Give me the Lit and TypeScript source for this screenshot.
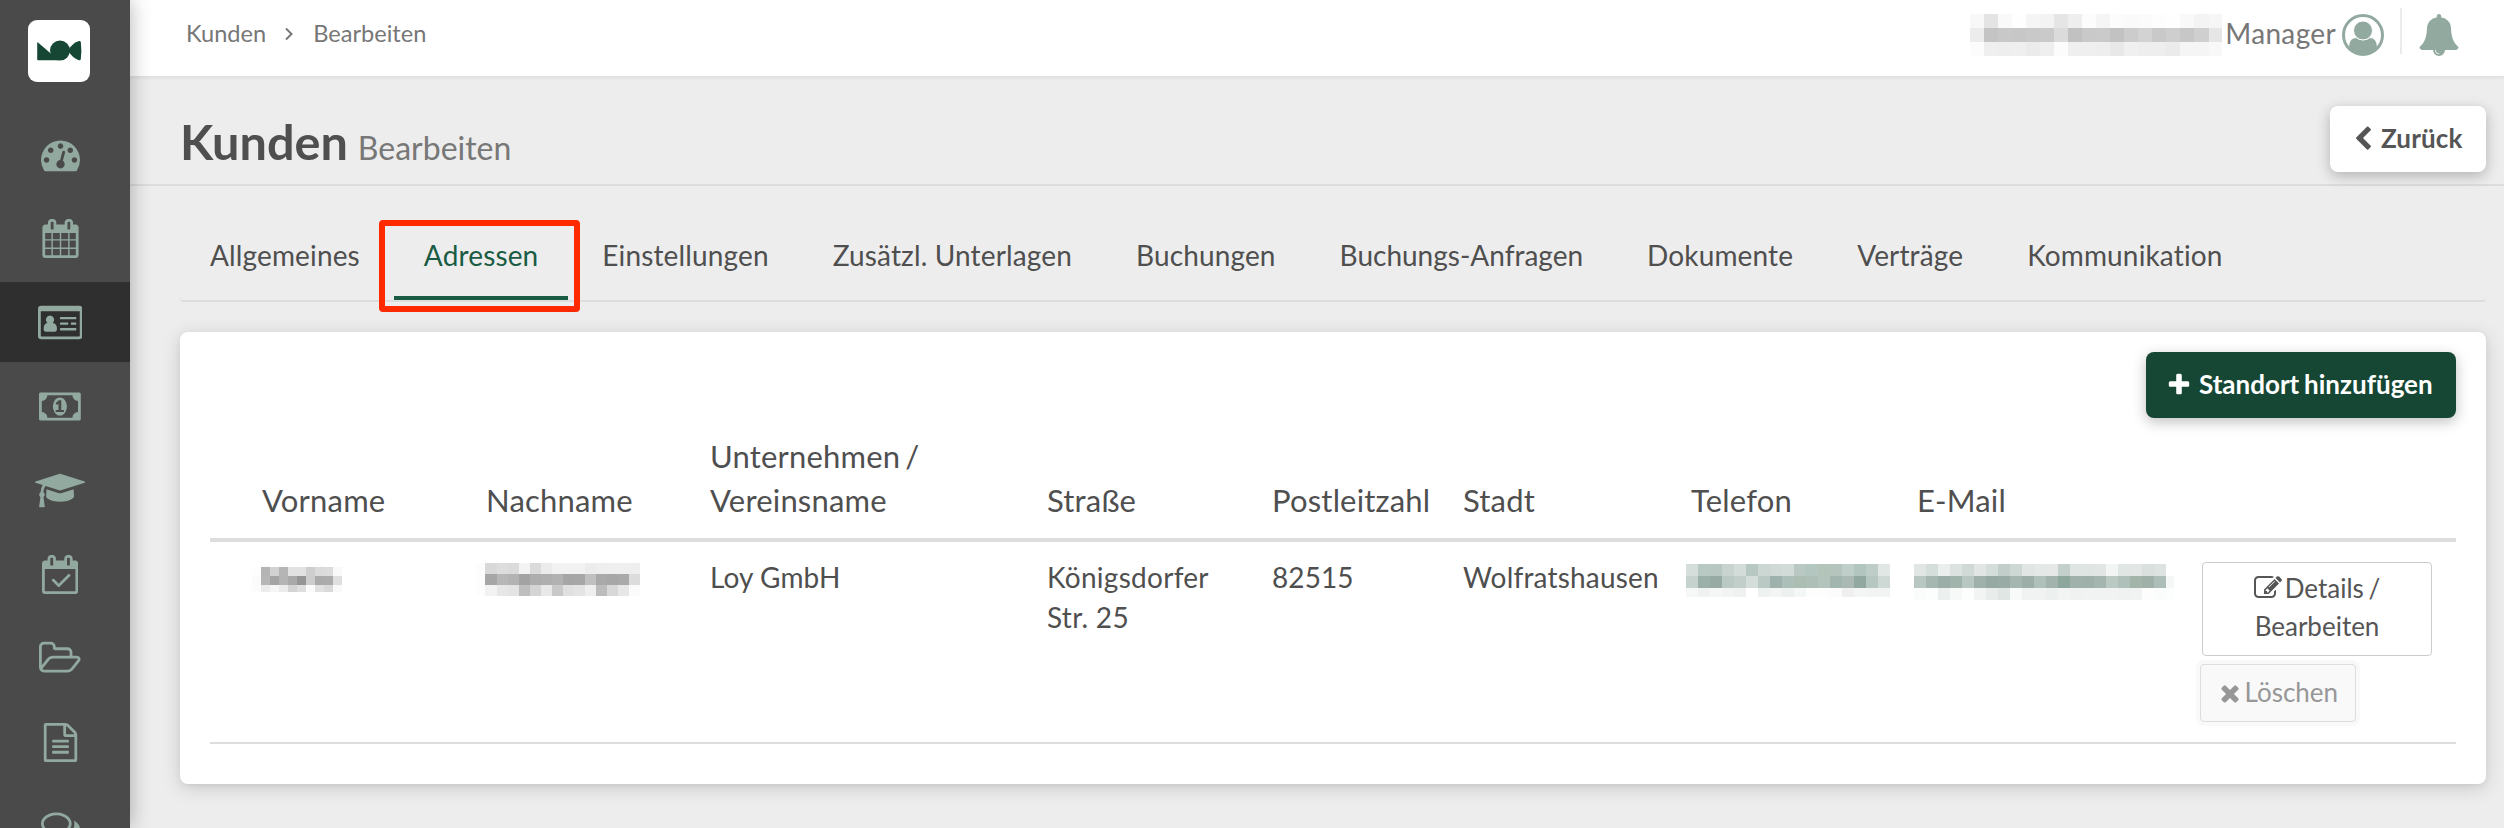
import { LitElement, html, css, svg, nothing } from "lit";
import { customElement, property, state } from "lit/decorators.js";
import { classMap } from "lit/directives/class-map.js";

interface Glyph {
  w: number;
  d: string;
}

// Glyph outlines on a 1792-unit em; w is the advance width.
const ICONS: Record<string, Glyph> = {
  dashboard: {
    w: 1792,
    d: "M384 1152q0-53-37.5-90.5t-90.5-37.5-90.5 37.5-37.5 90.5 37.5 90.5 90.5 37.5 90.5-37.5 37.5-90.5zm192-448q0-53-37.5-90.5t-90.5-37.5-90.5 37.5-37.5 90.5 37.5 90.5 90.5 37.5 90.5-37.5 37.5-90.5zm428 481l101-382q6-26-7.5-48.5t-38.5-29.5-48 6.5-30 39.5l-101 382q-60 5-107 43.5t-63 98.5q-20 77 20 146t117 89 146-20 89-117q16-60-6-117t-72-91zm660-33q0-53-37.5-90.5t-90.5-37.5-90.5 37.5-37.5 90.5 37.5 90.5 90.5 37.5 90.5-37.5 37.5-90.5zm-640-640q0-53-37.5-90.5t-90.5-37.5-90.5 37.5-37.5 90.5 37.5 90.5 90.5 37.5 90.5-37.5 37.5-90.5zm448 192q0-53-37.5-90.5t-90.5-37.5-90.5 37.5-37.5 90.5 37.5 90.5 90.5 37.5 90.5-37.5 37.5-90.5zm320 448q0 261-141 483-19 29-54 29h-1402q-35 0-54-29-141-221-141-483 0-182 71-348t191-286 286-191 348-71 348 71 286 191 191 286 71 348z",
  },
  calendar: {
    w: 1792,
    d: "M192 1664h288v-288h-288v288zm352 0h320v-288h-320v288zm-352-352h288v-320h-288v320zm352 0h320v-320h-320v320zm-352-384h288v-288h-288v288zm736 736h320v-288h-320v288zm-384-736h320v-288h-320v288zm768 736h288v-288h-288v288zm-384-352h320v-320h-320v320zm-352-864v-288q0-13-9.5-22.5t-22.5-9.5h-64q-13 0-22.5 9.5t-9.5 22.5v288q0 13 9.5 22.5t22.5 9.5h64q13 0 22.5-9.5t9.5-22.5zm736 864h288v-320h-288v320zm-384-384h320v-288h-320v288zm384 0h288v-288h-288v288zm32-480v-288q0-13-9.5-22.5t-22.5-9.5h-64q-13 0-22.5 9.5t-9.5 22.5v288q0 13 9.5 22.5t22.5 9.5h64q13 0 22.5-9.5t9.5-22.5zm384-64v1280q0 52-38 90t-90 38h-1408q-52 0-90-38t-38-90v-1280q0-52 38-90t90-38h128v-96q0-66 47-113t113-47h64q66 0 113 47t47 113v96h384v-96q0-66 47-113t113-47h64q66 0 113 47t47 113v96h128q52 0 90 38t38 90z",
  },
  idcard: {
    w: 2048,
    d: "M152 128H1896a152 152 0 0 1 152 152V1512a152 152 0 0 1-152 152H152a152 152 0 0 1-152-152V280a152 152 0 0 1 152-152zM128 384V1504a32 32 0 0 0 32 32H1888a32 32 0 0 0 32-32V384zM552 570a190 196 0 0 1 120 345q201 20 201 270 0 140-110 140H370q-110 0-110-140 0-250 172-270a190 196 0 0 1 120-345zM1040 640H1730q32 0 32 32v48q0 32-32 32H1040q-32 0-32-32v-48q0-32 32-32zM1040 896H1360q32 0 32 32v40q0 32-32 32H1040q-32 0-32-32v-40q0-32 32-32zM1540 896H1730q32 0 32 32v40q0 32-32 32H1540q-32 0-32-32v-40q0-32 32-32zM1040 1150H1730q32 0 32 32v48q0 32-32 32H1040q-32 0-32-32v-48q0-32 32-32z",
  },
  money: {
    w: 1920,
    d: "M768 1152h384v-96h-128v-448h-114l-148 137 77 80q42-37 55-57h2v288h-128v96zm512-256q0 70-21 142t-59.5 134-101.5 101-138 39-138-39-101.5-101-59.5-134-21-142 21-142 59.5-134 101.5-101 138-39 138 39 101.5 101 59.5 134 21 142zm512 256v-512q-106 0-181-75t-75-181h-1152q0 106-75 181t-181 75v512q106 0 181 75t75 181h1152q0-106 75-181t181-75zm128-832v1152q0 26-19 45t-45 19h-1792q-26 0-45-19t-19-45v-1152q0-26 19-45t45-19h1792q26 0 45 19t19 45z",
  },
  graduation: {
    w: 2304,
    d: "M1774 836l18 316q4 69-82 128t-235 93.5-323 34.5-323-34.5-235-93.5-82-128l18-316 574 181q22 7 48 7t48-7zm530-324q0 23-22 31l-1120 352q-4 1-10 1t-10-1l-652-206q-43 34-71 111.5t-34 178.5q63 36 63 109 0 69-58 107l58 433q2 14-8 25-9 11-24 11h-192q-15 0-24-11-10-11-8-25l58-433q-58-38-58-107 0-73 65-111 11-207 98-330l-333-104q-22-8-22-31t22-31l1120-352q4-1 10-1t10 1l1120 352q22 8 22 31z",
  },
  calendarCheck: {
    w: 1664,
    d: "M1303 964l-512 512q-10 9-23 9t-23-9l-288-288q-9-10-9-23t9-22l46-46q9-9 22-9t23 9l220 220 444-444q10-9 23-9t22 9l46 46q9 9 9 22t-9 23zm-1175 700h1408v-1024h-1408v1024zm384-1216v-288q0-14-9-23t-23-9h-64q-14 0-23 9t-9 23v288q0 14 9 23t23 9h64q14 0 23-9t9-23zm768 0v-288q0-14-9-23t-23-9h-64q-14 0-23 9t-9 23v288q0 14 9 23t23 9h64q14 0 23-9t9-23zm384-64v1280q0 52-38 90t-90 38h-1408q-52 0-90-38t-38-90v-1280q0-52 38-90t90-38h128v-96q0-66 47-113t113-47h64q66 0 113 47t47 113v96h384v-96q0-66 47-113t113-47h64q66 0 113 47t47 113v96h128q52 0 90 38t38 90z",
  },
  folder: {
    w: 1909,
    d: "M1781 931q0-35-53-35h-1088q-40 0-85.5 21.5t-71.5 52.5l-294 363q-18 24-18 40 0 35 53 35h1088q40 0 86-22t71-53l294-363q18-22 18-39zm-1141-163h768v-160q0-40-28-68t-68-28h-576q-40 0-68-28t-28-68v-64q0-40-28-68t-68-28h-320q-40 0-68 28t-28 68v853l256-315q44-53 116-87.5t140-34.5zm1269 163q0 62-46 120l-295 363q-43 53-116 87.5t-140 34.5h-1088q-92 0-158-66t-66-158v-960q0-92 66-158t158-66h320q92 0 158 66t66 158v32h544q92 0 158 66t66 158v160h192q54 0 99 24.5t67 70.5q15 32 15 68z",
  },
  file: {
    w: 1792,
    d: "M1596 380q28 28 48 76t20 88v1152q0 40-28 68t-68 28h-1344q-40 0-68-28t-28-68v-1600q0-40 28-68t68-28h896q40 0 88 20t76 48zm-444-244v376h376q-10-29-22-41l-313-313q-12-12-41-22zm384 1528v-1024h-416q-40 0-68-28t-28-68v-416h-768v1536h1280zm-1024-864q0-14 9-23t23-9h704q14 0 23 9t9 23v64q0 14-9 23t-23 9h-704q-14 0-23-9t-9-23v-64zm736 224q14 0 23 9t9 23v64q0 14-9 23t-23 9h-704q-14 0-23-9t-9-23v-64q0-14 9-23t23-9h704zm0 256q14 0 23 9t9 23v64q0 14-9 23t-23 9h-704q-14 0-23-9t-9-23v-64q0-14 9-23t23-9h704z",
  },
  comments: {
    w: 1792,
    d: "M704 384q-153 0-286 52t-211.5 141-78.5 191q0 82 53 158t149 132l97 56-35 84q34-20 62-39l44-31 53 10q78 14 153 14 153 0 286-52t211.5-141 78.5-191-78.5-191-211.5-141-286-52zm0-128q191 0 353.5 68.5t256.5 186.5 94 257-94 257-256.5 186.5-353.5 68.5q-86 0-176-16-124 88-278 128-36 9-86 16h-3q-11 0-20.5-8t-11.5-21q-1-3-1-6.5t.5-6.5 2-6l2.5-5 3.5-5.5 4-5 4.5-5 4-4.5q5-6 23-25t26-29.5 22.5-29 25-38.5 20.5-44q-124-72-195-177t-71-224q0-139 94-257t256.5-186.5 353.5-68.5zm822 1169q10 24 20.5 44t25 38.5 22.5 29 26 29.5 23 25q1 1 4 4.5t4.5 5 4 5 3.5 5.5l2.5 5 2 6 .5 6.5-1 6.5q-3 14-13 22t-22 7q-50-7-86-16-154-40-278-128-90 16-176 16-271 0-472-132 58 4 88 4 161 0 309-45t264-129q125-92 192-212t67-254q0-77-23-152 129 71 204 178t75 230q0 120-71 224.5t-195 176.5z",
  },
  bell: {
    w: 1792,
    d: "M912 1696q0-16-16-16-59 0-101.5-42.5t-42.5-101.5q0-16-16-16t-16 16q0 73 51.5 124.5t124.5 51.5q16 0 16-16zm816-288q0 52-38 90t-90 38h-448q0 106-75 181t-181 75-181-75-75-181h-448q-52 0-90-38t-38-90q50-42 91-88t85-119.5 74.5-158.5 50-206 19.5-260q0-152 117-282.5t307-158.5q-8-19-8-39 0-40 28-68t68-28 68 28 28 68q0 20-8 39 190 28 307 158.5t117 282.5q0 139 19.5 260t50 206 74.5 158.5 85 119.5 91 88z",
  },
  chevron: {
    w: 1792,
    d: "M1427 301l-531 531 531 531q19 19 19 45t-19 45l-166 166q-19 19-45 19t-45-19l-742-742q-19-19-19-45t19-45l742-742q19-19 45-19t45 19l166 166q19 19 19 45t-19 45z",
  },
  plus: {
    w: 1792,
    d: "M1600 736v192q0 40-28 68t-68 28h-416v416q0 40-28 68t-68 28h-192q-40 0-68-28t-28-68v-416h-416q-40 0-68-28t-28-68v-192q0-40 28-68t68-28h416v-416q0-40 28-68t68-28h192q40 0 68 28t28 68v416h416q40 0 68 28t28 68z",
  },
  times: {
    w: 1792,
    d: "M1490 1322q0 40-28 68l-136 136q-28 28-68 28t-68-28l-294-294-294 294q-28 28-68 28t-68-28l-136-136q-28-28-28-68t28-68l294-294-294-294q-28-28-28-68t28-68l136-136q28-28 68-28t68 28l294 294 294-294q28-28 68-28t68 28l136 136q28 28 28 68t-28 68l-294 294 294 294q28 28 28 68z",
  },
  edit: {
    w: 1792,
    d: "M888 1184l116-116-152-152-116 116v56h96v96h56zm440-720q-16-16-33 1l-350 350q-17 17-1 33t33-1l350-350q17-17 1-33zm80 594v190q0 119-84.5 203.5t-203.5 84.5h-832q-119 0-203.5-84.5t-84.5-203.5v-832q0-119 84.5-203.5t203.5-84.5h832q63 0 117 25 15 7 18 23 3 17-9 29l-49 49q-14 14-32 8-23-6-45-6h-832q-66 0-113 47t-47 113v832q0 66 47 113t113 47h832q66 0 113-47t47-113v-126q0-13 9-22l64-64q15-15 35-7t20 29zm-96-738l288 288-672 672h-288v-288zm444 132l-92 92-288-288 92-92q28-28 68-28t68 28l152 152q28 28 28 68t-28 68z",
  },
};

@customElement("fa-icon")
export class FaIcon extends LitElement {
  @property() name = "";
  @property({ type: Number }) size = 28;

  static styles = css`
    :host {
      display: inline-flex;
      flex: none;
    }
    .glyph {
      display: block;
      fill: currentColor;
      fill-rule: evenodd;
    }
  `;

  render() {
    const g = ICONS[this.name];
    if (!g) return nothing;
    return html`<svg
      class="glyph"
      width=${(g.w / 1792) * this.size}
      height=${this.size}
      viewBox="0 0 ${g.w} 1792"
    >
      <path d=${g.d}></path>
    </svg>`;
  }
}

interface Mosaic {
  cols: number[];
  rows: number[];
  shades: string[];
}

const repeat = (n: number, size: number) => Array.from({ length: n }, () => size);

// Redacted values: one hex colour per tile, row by row.
const MOSAICS: Record<string, Mosaic> = {
  account: {
    cols: repeat(18, 14.03),
    rows: [14, 14, 14],
    shades: [
      "f8f8f8 e4e4e4 f9f9f9 fefefe f5f5f5 f3f3f3 e5e5e5 eeeeee fcfcfc f5f5f5 fcfcfc fafafa fbfbfb fdfdfd fefefe f9f9f9 f4f4f4 f6f6f6",
      "ececec c4c4c4 c8c8c8 c7c7c7 c9c9c9 cacaca dbdbdb c1c1c1 c9c9c9 cacaca c2c2c2 cccccc d3d3d3 c9c9c9 cecece c7c7c7 cfcfcf e6e6e6",
      "fcfcfc efefef eeeeee efefef ebebeb efefef fcfcfc efefef efefef eeeeee e8e8e8 f0f0f0 eeeeee eeeeee ebebeb f5f5f5 f5f5f5 f8f8f8",
    ],
  },
  first: {
    cols: repeat(10, 9),
    rows: [3, 9, 9, 6.7],
    shades: [
      "ffffff fcfcfc ffffff fdfdfd ffffff ffffff fdfdfd fdfdfd ffffff ffffff",
      "fdfdfd b4b4b4 d2d2d2 b5b5b5 e2e2e2 e2e2e2 cecece dadada dcdcdc f9f9f9",
      "fbfbfb b6b6b6 a4a4a4 b4b4b4 a9a9a9 959595 cdcdcd aaaaaa ababab dfdfdf",
      "fcfcfc ececec f6f6f6 ebebeb d3d3d3 dedede fafafa e1e1e1 d9d9d9 f9f9f9",
    ],
  },
  last: {
    cols: [9.5, ...repeat(14, 11.04)],
    rows: [11, 11, 11],
    shades: [
      "fcfcfc d8d8d8 dddddd dbdbdb f3f3f3 dadada ebebeb f2f2f2 f2f2f2 f2f2f2 ececec eeeeee efefef efefef eeeeee",
      "fcfcfc a6a6a6 b7b7b7 b3b3b3 a3a3a3 adadad afafaf b2b2b2 a6a6a6 a7a7a7 c0c0c0 a9a9a9 a7a7a7 aaaaaa dcdcdc",
      "fdfdfd f2f2f2 e7e7e7 e4e4e4 bebebe d4d4d4 e8e8e8 c9c9c9 e0e0e0 e4e4e4 efefef bcbcbc d8d8d8 e7e7e7 fbfbfb",
    ],
  },
  phone: {
    cols: repeat(17, 12),
    rows: [12, 12, 9],
    shades: [
      "d5dedb b8c8c2 b8c7c1 c8d3cf d3dcd8 b7c7c1 ccd7d3 d0d9d6 d3dbd8 bac8c3 b3c6c0 b3c4bb b5c5bd bfcec8 b3c5bf becdc7 e0e7e5",
      "c5d2cd 9bb0a8 97aba4 bac9c4 c1cec9 d5ddda bac9c3 9fb1ac adbfb9 acbeb4 adbfb7 b3c4bd a3b5af aab9b3 90a89f b6c6c0 ced8d4",
      "f5f8f7 f0f2f1 f5f7f6 f2f4f3 eff1f0 ffffff edf2f0 f2f5f4 ecf1ef f3f7f5 fdfdfd fdfdfd fbfbfb efefef f4f6f5 f1f4f3 f1f4f3",
    ],
  },
  mail: {
    cols: [...repeat(21, 12), 8],
    rows: [12, 12, 12],
    shades: [
      "e1e6e4 d6dedb eaeeed dce2e0 d1d9d6 e1e6e4 d4ddd9 c1cec9 cdd7d3 e1e6e4 e4e8e7 e5e8e7 c2cfca dfe5e3 dfe5e3 e1e6e4 f3f5f4 dfe6e3 e2e7e5 d9e0dd dde3e1 ffffff",
      "b8c7c1 a6b7b1 9aaea7 a1b4ab b8c7c1 9fb1aa 96aaa3 98aba4 a4b6af 9caea7 aec0b9 a1b3ac 8ea79d a0b1ab 9eb0a9 a4b5af bbc9c3 afc0ba a3b4aa 9fb0a9 adbdb7 f5f7f6",
      "f9fcfb fbfefd ebefee f7f9f8 fbfefd f1f4f3 e8eceb e0e6e4 f8faf9 f1f3f2 f1f3f2 ecf1ef f1f4f3 eff2f1 f1f2f2 f1f2f2 f1f3f2 f0f2f1 f1f3f2 fdfdfd fafdfc fcfefd",
    ],
  },
};

@customElement("redacted-text")
export class RedactedText extends LitElement {
  @property() kind = "";

  static styles = css`
    :host {
      display: block;
      flex: none;
    }
    .tiles {
      display: block;
      shape-rendering: crispEdges;
    }
  `;

  render() {
    const m = MOSAICS[this.kind];
    if (!m) return nothing;
    const sum = (a: number[]) => a.reduce((s, n) => s + n, 0);
    const w = sum(m.cols);
    const h = sum(m.rows);
    return html`<svg class="tiles" width=${w} height=${h} viewBox="0 0 ${w} ${h}">
      ${m.rows.map((rh, r) =>
        m.shades[r].split(" ").map(
          (c, i) => svg`<rect x=${sum(m.cols.slice(0, i))} y=${sum(m.rows.slice(0, r))}
            width=${m.cols[i]} height=${rh} fill=${"#" + c}></rect>`
        )
      )}
    </svg>`;
  }
}

@customElement("side-nav")
export class SideNav extends LitElement {
  @state() private active = "idcard";

  static styles = css`
    :host {
      display: flex;
      flex-direction: column;
      flex: none;
      width: 130px;
      height: 100%;
      box-sizing: border-box;
      overflow: hidden;
      background: #4a4a4a;
      color: #92a9a0;
    }
    .logo {
      flex: none;
      width: 62px;
      height: 62px;
      margin: 20px 0 32px 28px;
      border-radius: 9px;
      background: #fff;
    }
    .logo svg {
      display: block;
      fill: #154734;
    }
    .item {
      display: flex;
      align-items: center;
      justify-content: center;
      flex: none;
      height: 80px;
      margin-bottom: 4px;
      padding-right: 10px;
    }
    .item.active {
      background: #2f2f2f;
    }
  `;

  render() {
    const items = [
      "dashboard",
      "calendar",
      "idcard",
      "money",
      "graduation",
      "calendarCheck",
      "folder",
      "file",
      "comments",
    ];
    return html`
      <div class="logo">
        <svg width="62" height="62" viewBox="0 0 62 62">
          <path d="M9.200 39.500V23.200q0-1.400 1.100-.5L24 34.500 31 40.300H10q-.8 0-.8-.8z"></path>
          <circle cx="32" cy="30.600" r="10"></circle>
          <path
            d="M40 30.500Q44.500 22.800 51 21q1.500-.3 1.800 1 1.100 8.500 0 17-.3 1.600-1.800 1.200Q44.500 38.200 40 30.500z"
          ></path>
        </svg>
      </div>
      ${items.map(
        (n) => html`<div
          class=${classMap({ item: true, active: n === this.active })}
          @click=${() => (this.active = n)}
        >
          <fa-icon name=${n} size="39"></fa-icon>
        </div>`
      )}
    `;
  }
}

@customElement("top-bar")
export class TopBar extends LitElement {
  static styles = css`
    :host {
      display: flex;
      flex: none;
      justify-content: space-between;
      height: 76px;
      box-sizing: border-box;
      padding: 0 44px 0 56px;
      background: #fff;
      color: #777;
      box-shadow: 0 2px 1px #e2e2e2, 0 4px 3px rgba(0, 0, 0, 0.02);
    }
    .crumbs {
      display: flex;
      align-items: center;
      height: 66px;
      font-size: 23.6px;
      line-height: 34px;
    }
    .sep {
      display: block;
      margin: 0 18px 0 17px;
      fill: none;
      stroke: #777;
      stroke-width: 2;
    }
    .user {
      display: flex;
      align-items: flex-start;
      height: 76px;
    }
    .user redacted-text {
      margin-top: 14px;
    }
    .role {
      margin: 13px 6px 0 3px;
      font-size: 28px;
      line-height: 40px;
      letter-spacing: 0.35px;
    }
    .avatar {
      display: block;
      margin-top: 14px;
      color: #92a9a0;
    }
    .rule {
      width: 2px;
      height: 46px;
      margin: 8px 16px 0 16px;
      background: #ebebeb;
    }
    .bell {
      margin-top: 14px;
      color: #92a9a0;
    }
  `;

  render() {
    return html`
      <nav class="crumbs">
        <span>Kunden</span>
        <svg class="sep" width="12" height="16" viewBox="0 0 12 16">
          <path d="M3 3.500l5.500 5.500-5.500 5.500"></path>
        </svg>
        <span>Bearbeiten</span>
      </nav>
      <div class="user">
        <redacted-text kind="account"></redacted-text>
        <span class="role">Manager</span>
        <svg class="avatar" width="42" height="42" viewBox="0 0 42 42">
          <path
            fill="currentColor"
            d="M7 33Q7.500 24 14 24q3 2.200 7 2.200t7-2.200q6.500 0 7 9Q30 40.500 21 40.500T7 33z"
          ></path>
          <circle
            cx="21"
            cy="16.500"
            r="9.500"
            fill="currentColor"
            stroke="#fff"
            stroke-width="1"
          ></circle>
          <circle
            cx="21"
            cy="21"
            r="19.500"
            fill="none"
            stroke="currentColor"
            stroke-width="3"
          ></circle>
        </svg>
        <div class="rule"></div>
        <fa-icon class="bell" name="bell" size="42"></fa-icon>
      </div>
    `;
  }
}

@customElement("tab-strip")
export class TabStrip extends LitElement {
  @state() private current = "Adressen";

  static styles = css`
    :host {
      display: flex;
      height: 82px;
      box-sizing: border-box;
      border-bottom: 2px solid #ddd;
      border-radius: 6px 6px 4px 4px;
      font-size: 28px;
      line-height: 40px;
      letter-spacing: 0.14px;
      color: #4f4f4f;
    }
    .tab {
      position: relative;
      box-sizing: border-box;
      height: 80px;
      margin-right: 4px;
      padding: 15px 30px 0;
      border-bottom: 4px solid transparent;
      white-space: nowrap;
    }
    .tab.compound {
      letter-spacing: 0;
    }
    .tab.on {
      color: #1a5b43;
      border-bottom-color: #1a5b43;
    }
    .frame {
      position: absolute;
      left: -15px;
      right: -12px;
      top: 0;
      bottom: -16px;
      border: 6px solid #ff2a00;
      border-radius: 4px;
      pointer-events: none;
    }
  `;

  render() {
    const tabs = [
      "Allgemeines",
      "Adressen",
      "Einstellungen",
      "Zusätzl. Unterlagen",
      "Buchungen",
      "Buchungs-Anfragen",
      "Dokumente",
      "Verträge",
      "Kommunikation",
    ];
    return tabs.map(
      (t) => html`<div
        class=${classMap({ tab: true, on: t === this.current, compound: t.includes("-") })}
        @click=${() => (this.current = t)}
      >
        <span>${t}</span>${t === "Adressen" ? html`<div class="frame"></div>` : nothing}
      </div>`
    );
  }
}

@customElement("address-card")
export class AddressCard extends LitElement {
  static styles = css`
    :host {
      display: block;
      height: 452px;
      box-sizing: border-box;
      padding: 20px 30px 0;
      border-radius: 8px;
      background: #fff;
      color: #4f4f4f;
      box-shadow: 0 4px 20px rgba(0, 0, 0, 0.14), 0 2px 6px rgba(0, 0, 0, 0.06);
    }
    .toolbar {
      display: flex;
      justify-content: flex-end;
      height: 66px;
    }
    .add {
      display: flex;
      align-items: center;
      box-sizing: border-box;
      width: 310px;
      height: 66px;
      padding-left: 20px;
      border-radius: 8px;
      background: #154734;
      color: #fff;
      font-size: 26px;
      font-weight: 700;
      white-space: nowrap;
      word-spacing: -1.5px;
      box-shadow: 0 4px 14px rgba(0, 0, 0, 0.25);
    }
    .add fa-icon {
      margin-right: 7px;
    }
    .add span {
      margin-bottom: 2px;
    }
    .row {
      display: grid;
      grid-template-columns: 224px 224px 337px 225px 191px 228px 226px 284px 1fr;
      padding-left: 52px;
    }
    .head {
      align-items: end;
      height: 124px;
      box-sizing: border-box;
      padding-bottom: 16px;
      border-bottom: 4px solid #ddd;
      font-size: 31px;
      line-height: 44px;
      letter-spacing: 0.18px;
      word-spacing: -3px;
    }
    .body {
      height: 202px;
      box-sizing: border-box;
      padding-top: 15px;
      border-bottom: 2px solid #ddd;
      font-size: 28px;
      line-height: 40px;
      letter-spacing: 0.1px;
    }
    .street {
      letter-spacing: 0.28px;
    }
    .town {
      letter-spacing: 0.18px;
    }
    .m-first {
      margin: 7px 0 0 -10px;
    }
    .m-last {
      margin: 6px 0 0 -10px;
    }
    .m-phone {
      margin: 7px 0 0 -5px;
    }
    .m-mail {
      margin: 7px 0 0 -3px;
    }
    .actions {
      display: flex;
      flex-direction: column;
      align-items: flex-start;
      font-size: 26px;
      line-height: 38px;
      letter-spacing: 0;
      color: #555;
    }
    .details {
      width: 230px;
      height: 94px;
      box-sizing: border-box;
      margin: 5px 0 0 1px;
      padding-top: 6px;
      border: 1px solid #ccc;
      border-radius: 4px;
      text-align: center;
      word-spacing: -2px;
      background: #fff;
    }
    .details fa-icon {
      vertical-align: -4px;
      margin-right: 3px;
    }
    .delete {
      display: flex;
      align-items: center;
      width: 156px;
      height: 58px;
      box-sizing: border-box;
      margin: 8px 0 0 -1px;
      padding-left: 16px;
      border: 1px solid #ddd;
      border-radius: 4px;
      background: #f9f9f9;
      color: #979797;
      box-shadow: 0 0 0 4px #f9f9f9;
    }
    .delete span {
      margin: 0 0 2px 1.5px;
    }
  `;

  render() {
    return html`
      <div class="toolbar">
        <div class="add">
          <fa-icon name="plus" size="26"></fa-icon><span>Standort hinzufügen</span>
        </div>
      </div>
      <div class="row head">
        <span>Vorname</span>
        <span>Nachname</span>
        <span>Unternehmen /<br />Vereinsname</span>
        <span>Straße</span>
        <span>Postleitzahl</span>
        <span>Stadt</span>
        <span>Telefon</span>
        <span>E-Mail</span>
        <span></span>
      </div>
      <div class="row body">
        <redacted-text class="m-first" kind="first"></redacted-text>
        <redacted-text class="m-last" kind="last"></redacted-text>
        <span>Loy GmbH</span>
        <span class="street">Königsdorfer<br />Str. 25</span>
        <span>82515</span>
        <span class="town">Wolfratshausen</span>
        <redacted-text class="m-phone" kind="phone"></redacted-text>
        <redacted-text class="m-mail" kind="mail"></redacted-text>
        <div class="actions">
          <div class="details">
            <fa-icon name="edit" size="28"></fa-icon><span>Details /</span><br /><span
              >Bearbeiten</span
            >
          </div>
          <div class="delete">
            <fa-icon name="times" size="26"></fa-icon><span>Löschen</span>
          </div>
        </div>
      </div>
    `;
  }
}

@customElement("app-root")
export class AppRoot extends LitElement {
  static styles = css`
    :host {
      display: flex;
      width: 100%;
      height: 828px;
      overflow: hidden;
      background: #ededed;
      font-family: Lato, "Liberation Sans", sans-serif;
      font-variant-ligatures: none;
    }
    side-nav {
      position: relative;
      box-shadow: 0 0 20px rgba(0, 0, 0, 0.3);
      z-index: 2;
    }
    .main {
      display: flex;
      flex-direction: column;
      flex: 1;
      min-width: 0;
    }
    .heading {
      display: flex;
      justify-content: space-between;
      height: 110px;
      box-sizing: border-box;
      padding: 30px 18px 0 50px;
      border-bottom: 2px solid #dcdcdc;
    }
    .title {
      display: flex;
      align-items: baseline;
      gap: 10px;
      height: 60px;
      margin-top: 5px;
      font-size: 48.6px;
      line-height: 60px;
      font-weight: 700;
      color: #4f4f4f;
    }
    .sub {
      font-size: 32px;
      font-weight: 400;
      color: #777;
    }
    .back {
      display: flex;
      align-items: center;
      width: 156px;
      height: 66px;
      box-sizing: border-box;
      padding-left: 20px;
      border-radius: 8px;
      background: #fff;
      color: #555;
      font-size: 26px;
      font-weight: 700;
      letter-spacing: 0.15px;
      box-shadow: 0 4px 14px rgba(0, 0, 0, 0.25);
    }
    .back fa-icon {
      margin-right: 5px;
    }
    .back span {
      margin-bottom: 2px;
    }
    .content {
      display: flex;
      flex-direction: column;
      gap: 30px;
      padding: 34px 18px 0 50px;
    }
  `;

  render() {
    return html`
      <side-nav></side-nav>
      <div class="main">
        <top-bar></top-bar>
        <div class="heading">
          <div class="title"><span>Kunden</span><span class="sub">Bearbeiten</span></div>
          <div class="back">
            <fa-icon name="chevron" size="26"></fa-icon><span>Zurück</span>
          </div>
        </div>
        <div class="content">
          <tab-strip></tab-strip>
          <address-card></address-card>
        </div>
      </div>
    `;
  }
}
